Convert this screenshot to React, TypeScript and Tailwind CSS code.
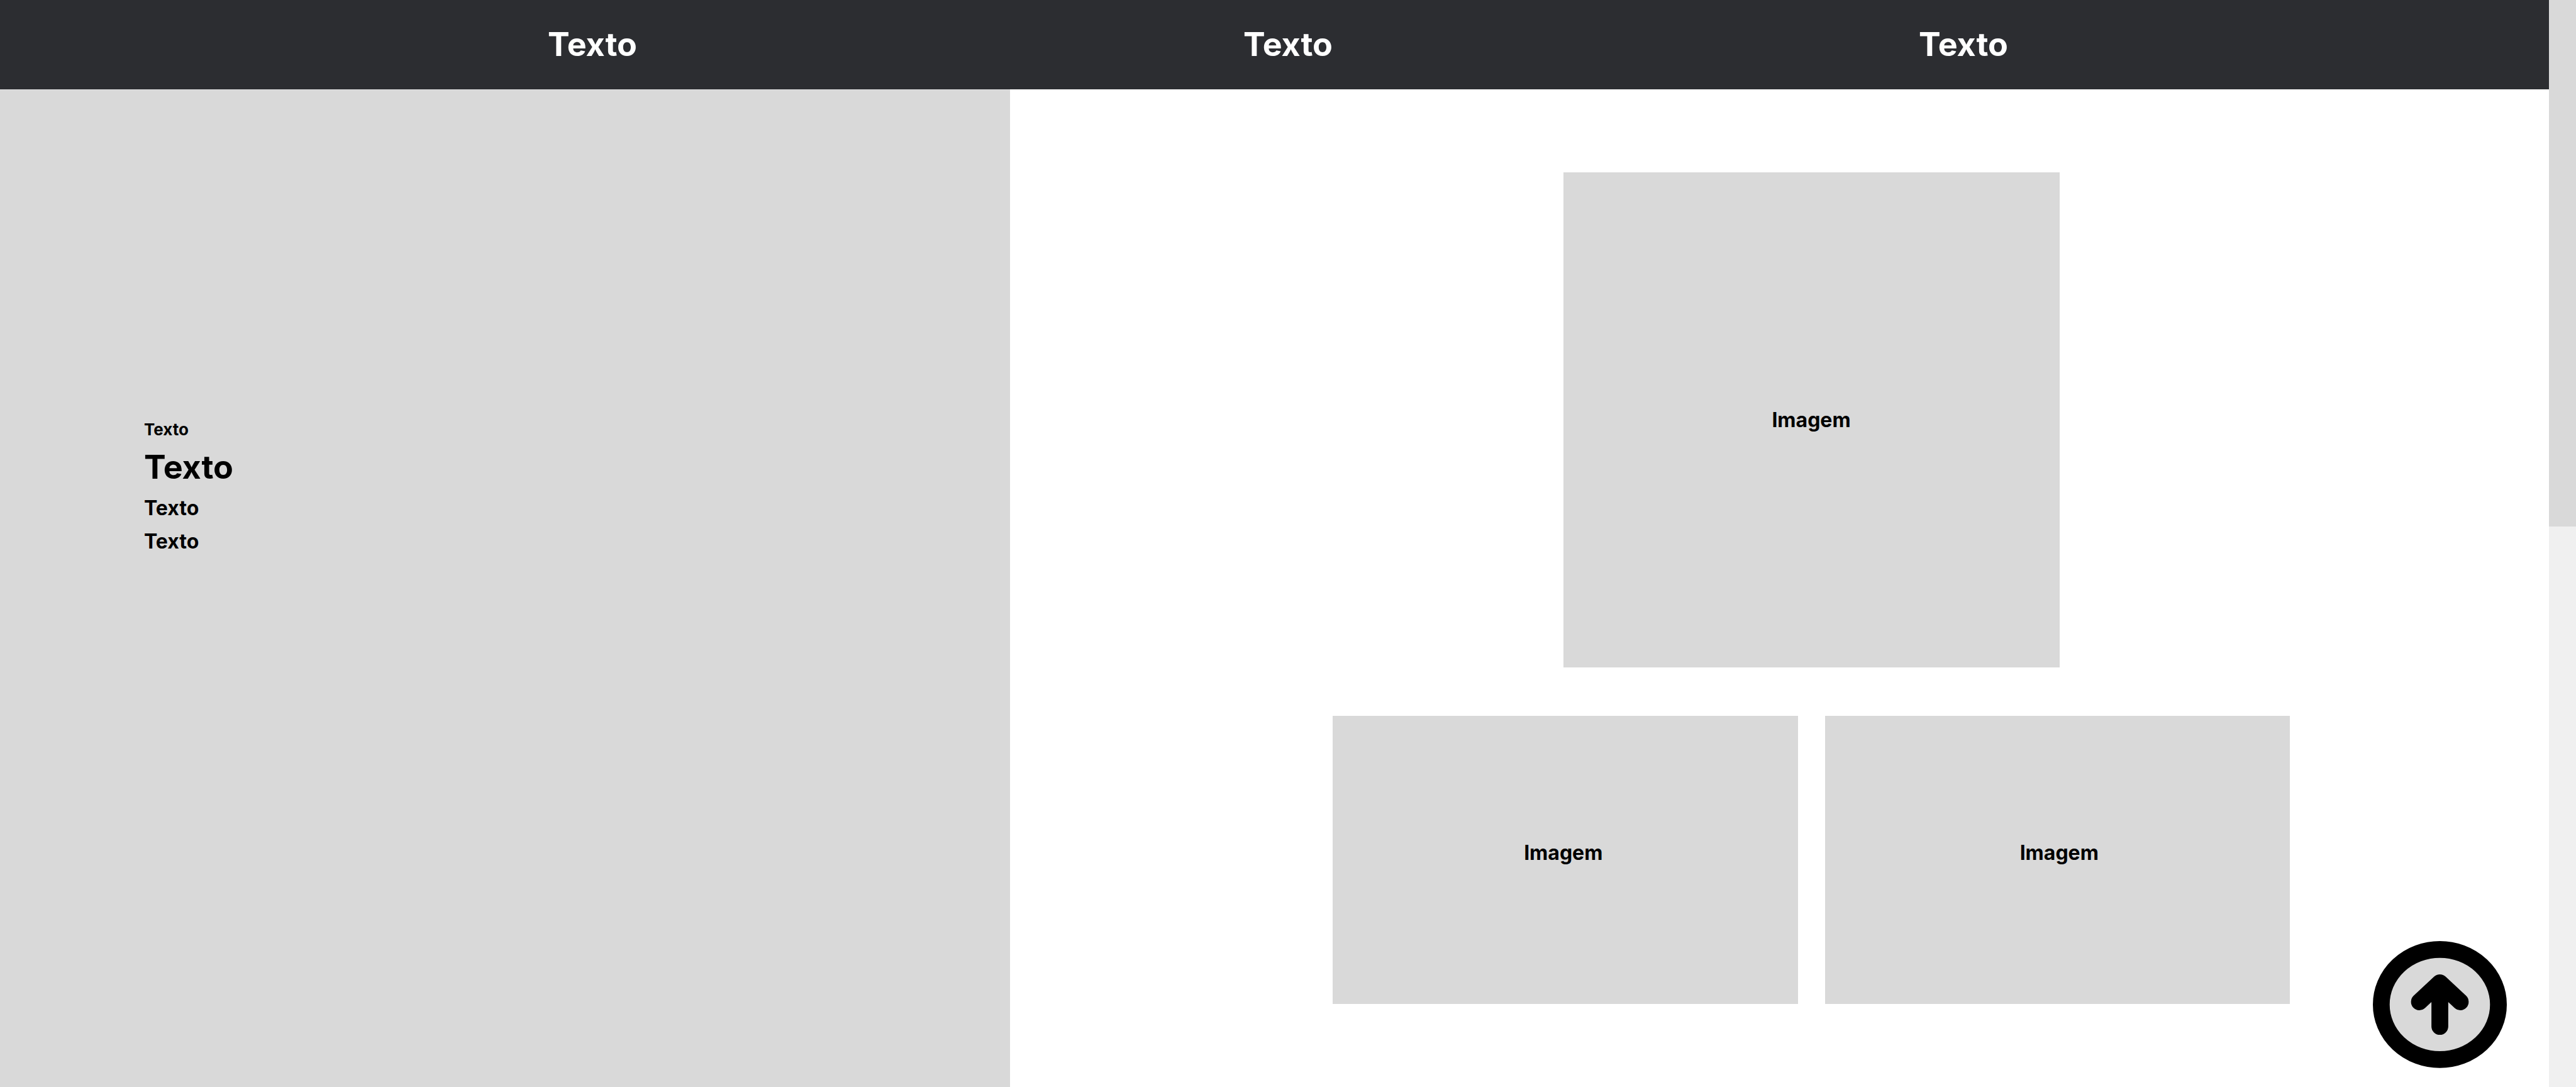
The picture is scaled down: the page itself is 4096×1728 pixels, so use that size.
const heroLines = [
  { id: "kicker", className: "text-[26px] leading-[31px]" },
  { id: "title", className: "text-[52px] leading-[62px]" },
  { id: "subtitle", className: "text-[32px] leading-[39px]" },
  { id: "detail", className: "text-[32px] leading-[39px]" },
];

function Header() {
  return (
    <header className="bg-[#2c2d31] text-white">
      <nav className="grid h-[142px] grid-cols-[1106fr_1106fr_1042fr] items-center justify-items-center pr-[410px] pl-[389px] text-[52px] leading-[62px]">
        <a href="#inicio">Texto</a>
        <a href="#galeria">Texto</a>
        <a href="#contato">Texto</a>
      </nav>
    </header>
  );
}

function Hero() {
  return (
    <section id="inicio" className="flex flex-col gap-3.5 bg-[#d9d9d9] pt-[525px] pl-[229px]">
      {heroLines.map((line) => (
        <p key={line.id} className={line.className}>
          Texto
        </p>
      ))}
    </section>
  );
}

function ImageBox({ className }: { className: string }) {
  return (
    <figure className={`flex items-center justify-center bg-[#d9d9d9] ${className}`}>
      <figcaption className="text-[32px] leading-[39px]">Imagem</figcaption>
    </figure>
  );
}

function Gallery() {
  return (
    <section id="galeria" className="flex flex-col items-center gap-[77px] bg-white pt-[132px] pr-[412px] pl-[513px]">
      <ImageBox className="aspect-[789/787] w-[789px] max-w-full" />
      <div className="grid w-full grid-cols-2 gap-[43px]">
        <ImageBox className="aspect-[739/458] pr-1.5 pb-6" />
        <ImageBox className="aspect-[739/458] pb-6 pl-1.5" />
      </div>
    </section>
  );
}

function BackToTop() {
  return (
    <button type="button" aria-label="Voltar ao topo" className="fixed right-[110px] bottom-[30px] w-[213px] cursor-pointer">
      <svg viewBox="112 93 797 755" className="block w-full" fill="none" stroke="#000" strokeWidth="100" strokeLinecap="round" strokeLinejoin="round">
        <ellipse cx="510.5" cy="470.5" rx="348.5" ry="327.5" fill="#d9d9d9" />
        <path d="M389 454.5 510.5 341 632 454.5M510.5 341V601" />
      </svg>
    </button>
  );
}

function ScrollTrack() {
  return (
    <div aria-hidden="true" className="w-[43px] shrink-0 bg-[#f0f0f0]">
      <div className="h-[837px] bg-[#d9d9d9]" />
    </div>
  );
}

export default function App() {
  return (
    <div className="flex min-h-screen bg-white font-['Inter',sans-serif] font-bold text-black">
      <div className="flex grow flex-col">
        <Header />
        <main className="grid grow grid-cols-[1606fr_2447fr]">
          <Hero />
          <Gallery />
        </main>
      </div>
      <ScrollTrack />
      <BackToTop />
    </div>
  );
}
